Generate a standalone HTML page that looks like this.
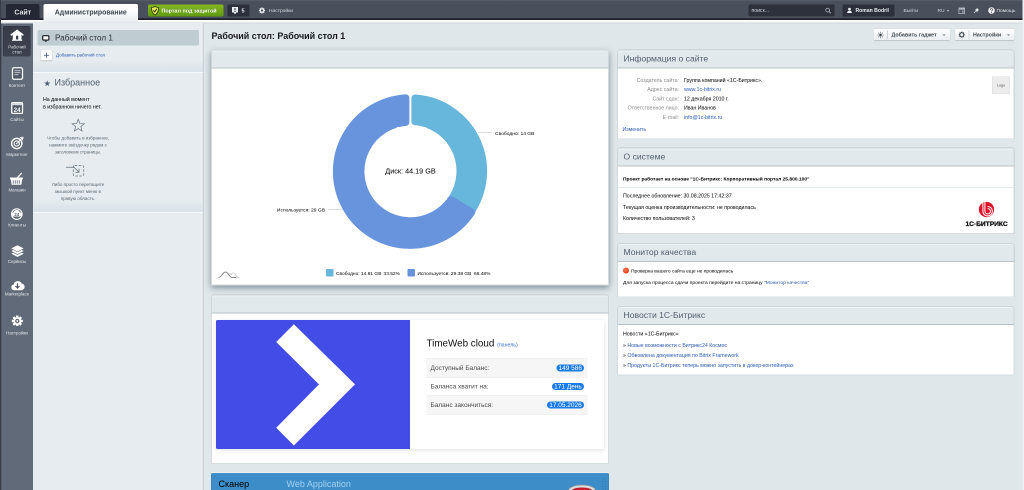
<!DOCTYPE html>
<html lang="ru">
<head>
<meta charset="utf-8">
<title>Рабочий стол</title>
<style>
*{box-sizing:border-box;margin:0;padding:0}
html,body{width:1024px;height:490px;overflow:hidden;background:#dfe7ea}
body{font-family:"Liberation Sans",sans-serif;font-size:13px;color:#000}
#root{position:absolute;left:0;top:0;width:2048px;height:980px;transform:scale(.5);transform-origin:0 0;will-change:transform;overflow:hidden}
a{color:#2b5bb5;text-decoration:none}
.abs{position:absolute}
/* header */
#hdr{position:absolute;left:0;top:0;width:2048px;height:40px;background:linear-gradient(#59606b 0,#4b515c 3px,#4a505b 36px,#1d222c 37px,#1d222c 40px)}
#hdrline{position:absolute;left:0;top:40px;width:2048px;height:7px;background:linear-gradient(#fff 0,#f3f6f7 4px,#e4eaed 5px,#c9d1d6 7px)}
.tab-site{position:absolute;left:12px;top:8px;width:67px;height:32px;background:#232834;border-radius:4px 4px 0 0;color:#e8ebef;font-weight:bold;font-size:14px;line-height:32px;text-align:center;text-shadow:0 -1px 0 #000}
.tab-adm{position:absolute;left:87px;top:8px;width:189px;height:36px;background:linear-gradient(#fff 30%,#e9eef0);border-radius:4px 4px 0 0;color:#3f4651;font-weight:bold;font-size:13.900px;line-height:33px;text-align:center}
.btn-green{position:absolute;left:296px;top:9px;width:151px;height:24px;border-radius:3px;background:linear-gradient(#86b81f,#5f9a10);color:#fff;font-weight:bold;font-size:10.8px;line-height:24px;padding-left:27px;text-shadow:0 -1px 0 #4d7d0c;white-space:nowrap}
.btn-dark{position:absolute;top:9px;height:24px;border-radius:3px;background:#2b303c;color:#e8ebef;font-weight:bold;font-size:11px;line-height:24px;white-space:nowrap}
.hlink{position:absolute;top:9px;height:24px;line-height:24px;color:#cfd4db;font-size:9.8px;white-space:nowrap}
/* left menu */
#lmenu{position:absolute;left:0;top:47px;width:66px;height:940px;background:#616a78}
#lmenu .edge{position:absolute;left:0;top:0;width:3px;height:100%;background:#4a5160}
.mi{position:absolute;left:1px;width:66px;text-align:center;color:#e4e7ec;font-size:8.900px;line-height:10.500px;white-space:nowrap}
.mi svg{display:block;margin:0 auto}
.actbox{position:absolute;left:6px;top:5px;width:55px;height:61px;background:linear-gradient(#383d49,#40465280);background-color:#3a3f4b;border:1px solid #2e323c;border-radius:3px;box-shadow:0 1px 0 rgba(255,255,255,.15)}
/* submenu */
#sub{position:absolute;left:66px;top:47px;width:341px;height:940px;background:#e6ecef;border-right:2px solid #ccd5da;box-shadow:inset -2px 0 0 #f1f5f7}
.deskitem{position:absolute;left:9px;top:13px;width:323px;height:31px;background:#bfccd2;border-radius:4px;font-size:16.3px;line-height:31px;color:#2a2f38;padding-left:35px}
.sub-sep{position:absolute;left:0;width:340px;height:2px;background:#d3dce0;border-bottom:1px solid #f4f7f8}
/* widgets */
.wh{position:absolute;background:#e2e9ec;border:2px solid #cdd6da;border-bottom:2px solid #b7c1c7;border-radius:6px 6px 0 0;box-shadow:inset 0 2px 0 #eef3f5;font-size:17.200px;line-height:33px;color:#526070;padding-left:11px;white-space:nowrap}
.wb{position:absolute;background:#fff;border:2px solid #d3dbdf;border-top:none;font-size:10.5px}
.t{position:absolute;white-space:nowrap}

.tbtn i{position:absolute;top:3px;width:3px;height:17px;background:#ccd4d9;border-right:1px solid #fff}
.tbtn{position:absolute;top:58px;height:23px;border-radius:4px;background:linear-gradient(#fff,#e9eef1);box-shadow:0 1px 1px rgba(0,0,0,.3),0 0 0 1px rgba(0,0,0,.05);font-weight:bold;font-size:10.7px;color:#3f4b54}
.tbtn span{position:absolute;top:0;line-height:23px;white-space:nowrap}
.shadow{position:absolute;box-shadow:0 5px 12px rgba(40,60,80,.5)}
.badge{position:absolute;height:14px;border-radius:7px;background:#1b7be9;color:#fff;font-size:13px;line-height:14.500px;text-align:center;white-space:nowrap}
.lbl{text-align:right;color:#8b8b8b;font-size:10.5px}
.val{font-size:10.5px;color:#000}
</style>
</head>
<body>
<div id="root">

<!-- ===== HEADER ===== -->
<div id="hdr"></div>
<div id="hdrline"></div>
<div class="tab-site">Сайт</div>
<div class="tab-adm">Администрирование</div>
<div class="btn-green">Портал под защитой</div>
<svg class="abs" style="left:302px;top:12px" width="16" height="19" viewBox="0 0 16 19"><path d="M8,1 C5.5,2.6 3.2,3 1,3 C0.8,9.5 2.6,14.8 8,18 C13.4,14.8 15.2,9.5 15,3 C12.8,3 10.5,2.6 8,1 Z" fill="#e6e85a" stroke="#2c3a12" stroke-width="1.6"/><path d="M4.6,8.6 L7.3,11.6 L11.6,5.8" fill="none" stroke="#2c3a12" stroke-width="2"/></svg>
<div class="btn-dark" style="left:455px;width:44px;padding-left:28px">5</div>
<svg class="abs" style="left:463px;top:13px" width="14" height="17" viewBox="0 0 14 17"><path d="M1,1 h12 v11 h-3.5 l-2.5,4 l-2.5,-4 h-3.500 Z" fill="#e9ecf0"/><rect x="6" y="3" width="2" height="5" fill="#2b303c"/><rect x="6" y="9" width="2" height="2" fill="#2b303c"/></svg>
<svg class="abs" style="left:518px;top:15px" width="12" height="12" viewBox="-7 -7 14 14"><g fill="#e9ecf0"><rect x="-1.6" y="-7" width="3.2" height="14"/><rect x="-1.6" y="-7" width="3.2" height="14" transform="rotate(45)"/><rect x="-1.6" y="-7" width="3.2" height="14" transform="rotate(90)"/><rect x="-1.6" y="-7" width="3.2" height="14" transform="rotate(135)"/><circle r="5.2"/></g><circle r="2.6" fill="#4a505b"/></svg>
<div class="hlink" style="left:538px;color:#d5d9df">Настройки</div>

<div class="abs" style="left:1497px;top:9px;width:172px;height:24px;background:#2c313c;border-radius:3px;border:1px solid #252931;box-shadow:0 1px 0 rgba(255,255,255,.12)"></div>
<div class="hlink" style="left:1503px;color:#d5d9df;font-size:10.2px">поиск...</div>
<svg class="abs" style="left:1650px;top:15px" width="13" height="13" viewBox="0 0 15 15"><circle cx="6" cy="6" r="4.3" fill="none" stroke="#aeb4be" stroke-width="1.8"/><path d="M9.2,9.2 L13.5,13.5" stroke="#aeb4be" stroke-width="2.2"/></svg>
<div class="btn-dark" style="left:1685px;width:104px;padding-left:26px;font-size:10.2px">Roman Bodril</div>
<svg class="abs" style="left:1694px;top:15px" width="10" height="12" viewBox="0 0 12 14"><circle cx="6" cy="3.6" r="3.2" fill="#f0f2f5"/><path d="M0.5,13 C0.5,9 3,7.6 6,7.6 C9,7.6 11.500,9 11.500,13 Z" fill="#f0f2f5"/></svg>
<div class="hlink" style="left:1807px">Выйти</div>
<div class="hlink" style="left:1875px">RU</div>
<svg class="abs" style="left:1893px;top:20px" width="6" height="4" viewBox="0 0 8 5"><path d="M0.5,0.5 h7 l-3.500,4 Z" fill="#c9ced6"/></svg>
<svg class="abs" style="left:1917px;top:15px" width="13" height="13" viewBox="0 0 15 15"><rect x="1" y="1" width="13" height="13" fill="none" stroke="#b4bac3" stroke-width="1.8"/><rect x="1" y="1" width="13" height="4" fill="#b4bac3"/><rect x="8" y="7" width="4" height="5" fill="#9aa0aa"/></svg>
<svg class="abs" style="left:1947px;top:15px" width="12" height="12" viewBox="0 0 16 16"><path d="M9,1 L15,7 L13,7.500 L10.500,10 L10.500,13 L3,5.500 L6,5.500 L8.500,3 Z" fill="#e9ecf0"/><path d="M6.500,9.500 L1.500,14.500" stroke="#e9ecf0" stroke-width="1.8"/></svg>
<svg class="abs" style="left:1976px;top:14px" width="14" height="14" viewBox="0 0 16 16"><circle cx="8" cy="8" r="7.5" fill="#f0f2f5"/><path d="M5.600,6.200 C5.600,3 10.600,3 10.600,6 C10.600,8 8,7.800 8,10" fill="none" stroke="#4a505b" stroke-width="1.8"/><rect x="7" y="11.200" width="2" height="2" fill="#4a505b"/></svg>
<div class="hlink" style="left:1993px;color:#e1e4e9">Помощь</div>

<!-- ===== LEFT MENU ===== -->
<div id="lmenu"><div class="edge"></div>
  <div class="actbox"></div>
  <svg class="abs" style="left:0;top:0" width="66" height="700" viewBox="0 47 66 700" font-family="Liberation Sans, sans-serif">
    <!-- home -->
    <path d="M21.500,70.500 L34.200,60.800 L46.800,70.500" stroke="#fff" stroke-width="3" fill="none"/>
    <path d="M25.500,69 L34.200,62.500 L43,69 V80 H25.500 Z" fill="#fff"/>
    <rect x="32" y="71.500" width="4.600" height="7.500" fill="#3a3f4b"/>
    <rect x="24" y="79.600" width="20.500" height="2" fill="#fff"/>
    <!-- content -->
    <rect x="25" y="135.500" width="20" height="23" rx="3" fill="#515968" stroke="#fff" stroke-width="2.600"/>
    <path d="M29,141.500h12M29,145.500h12M29,149.500h8" stroke="#e8ebef" stroke-width="1.700"/>
    <!-- sites -->
    <rect x="23.500" y="205.200" width="21.500" height="21.500" rx="2" fill="#515968" stroke="#fff" stroke-width="2.600"/>
    <rect x="24" y="206" width="20.500" height="4.500" fill="#d5d9e0"/>
    <text x="34.300" y="224" font-size="12.500" font-weight="bold" fill="#fff" text-anchor="middle">24</text>
    <!-- marketing -->
    <g fill="none" stroke="#fff">
      <circle cx="33.500" cy="287" r="10.300" stroke-width="2.800"/>
      <circle cx="33.500" cy="287" r="5.200" stroke-width="2.200"/>
      <circle cx="33.500" cy="287" r="1.600" fill="#fff" stroke="none"/>
      <path d="M35,285.500 L44.500,276" stroke-width="2.200"/>
      <path d="M40,275.500 l6,-1 l-1,6" stroke-width="1.800"/>
    </g>
    <!-- shop -->
    <g fill="#fff" stroke="none">
      <path d="M20,355 h26 v3.600 h-1.500 l-1.800,10.900 h-19.400 l-1.800,-10.900 h-1.500 Z"/>
      <path d="M33,355.500 l9.500,-10.500 l2,1.800 l-8,8.700 Z"/>
      <path d="M26.500,360.500v7M30.500,360.500v7M34.500,360.500v7M38.500,360.500v7" stroke="#616a78" stroke-width="1.700"/>
    </g>
    <!-- clients -->
    <circle cx="33.600" cy="428.200" r="10.600" fill="none" stroke="#fff" stroke-width="2.200"/>
    <path d="M26.500,433 a4,4 0 0 1 0.500,-8 a6.500,6.500 0 0 1 12.500,-0.500 a4.300,4.300 0 0 1 1,8.500 Z" fill="#fff"/>
    <text x="33.600" y="432" font-size="8.500" font-weight="bold" fill="#515968" text-anchor="middle">24</text>
    <!-- services -->
    <g fill="#fff">
      <path d="M35,490.500 L47.500,496.800 L35,503 L22.500,496.800 Z"/>
      <path d="M22.500,502 L35,508.300 L47.500,502 L43.500,500 L35,504.300 L26.500,500 Z"/>
      <path d="M22.500,507.500 L35,513.800 L47.500,507.500 L43.500,505.500 L35,509.800 L26.500,505.500 Z"/>
    </g>
    <!-- marketplace -->
    <path d="M28,580.500 a5.800,5.800 0 0 1 -0.500,-11.500 a8.200,8.200 0 0 1 15.500,-2 a6.800,6.800 0 0 1 0.500,13.500 Z" fill="#fff"/>
    <path d="M35,566.500 v8 M31,572 l4,4 l4,-4" stroke="#515968" stroke-width="2.400" fill="none"/>
    <!-- settings -->
    <g transform="translate(34.600,642)">
      <g fill="#fff">
        <rect x="-2.500" y="-11" width="5" height="22" rx="1"/>
        <rect x="-2.500" y="-11" width="5" height="22" rx="1" transform="rotate(45)"/>
        <rect x="-2.500" y="-11" width="5" height="22" rx="1" transform="rotate(90)"/>
        <rect x="-2.500" y="-11" width="5" height="22" rx="1" transform="rotate(135)"/>
        <circle r="7.800"/>
      </g>
      <circle r="4.400" fill="#616a78"/>
      <circle r="1.900" fill="#fff"/>
    </g>
  </svg>
  <div class="mi" style="top:43px;line-height:9.500px">Рабочий<br>стол</div>
  <div class="mi" style="top:119px">Контент</div>
  <div class="mi" style="top:187px">Сайты</div>
  <div class="mi" style="top:257px">Маркетинг</div>
  <div class="mi" style="top:328px">Магазин</div>
  <div class="mi" style="top:398px">Клиенты</div>
  <div class="mi" style="top:471px">Сервисы</div>
  <div class="mi" style="top:536px">Marketplace</div>
  <div class="mi" style="top:614px">Настройки</div>
</div>

<!-- ===== SUBMENU ===== -->
<div id="sub">
  <div class="abs" style="left:0;top:73px;width:340px;height:24px;background:linear-gradient(rgba(215,226,232,0),rgba(206,220,229,.55))"></div>
  <div class="abs" style="left:0;top:97px;width:340px;height:2px;background:#f7fafb"></div>
  <div class="deskitem">Рабочий стол 1</div>
  <svg class="abs" style="left:18px;top:23px" width="16" height="14" viewBox="0 0 18 16"><rect x="1.5" y="1.5" width="14" height="10" rx="2" fill="#fff" stroke="#15181d" stroke-width="2.6"/><path d="M5,13 h7 l-3.5,3 Z" fill="#15181d"/></svg>
  <div class="abs" style="left:16px;top:53px;width:22px;height:21px;background:#f8fafb;border-radius:3px;box-shadow:0 1px 2px rgba(0,0,0,.3)"></div>
  <svg class="abs" style="left:16px;top:53px" width="22" height="21" viewBox="0 0 22 21"><path d="M11,5.500v10M6,10.500h10" stroke="#40557e" stroke-width="1.700"/></svg>
  <div class="t" style="left:46px;top:58px;font-size:9px;color:#2b5bb5">Добавить рабочий стол</div>
  <svg class="abs" style="left:22px;top:113px" width="13" height="13" viewBox="0 0 16 16"><path d="M8,1 L10,6 L15.5,6.3 L11.2,9.7 L12.7,15 L8,12 L3.3,15 L4.8,9.7 L0.5,6.3 L6,6 Z" fill="#52627a"/></svg>
  <div class="t" style="left:43px;top:108px;font-size:18px;color:#53606f">Избранное</div>
  <div class="t" style="left:20px;top:144px;font-size:10.500px;line-height:15.400px;color:#000">На данный момент<br>в избранном ничего нет.</div>
  <svg class="abs" style="left:76px;top:189px" width="29" height="29" viewBox="0 0 32 32"><path d="M16,3 L19.6,12.2 L29.5,12.8 L21.8,19.1 L24.4,28.7 L16,23.3 L7.6,28.7 L10.2,19.1 L2.5,12.8 L12.4,12.2 Z" fill="none" stroke="#66717d" stroke-width="1.500" stroke-linejoin="miter"/></svg>
  <div class="t" style="left:-2px;width:184px;top:222px;font-size:9px;line-height:14px;color:#5d6873;text-align:center">Чтобы добавить в избранное,<br>нажмите звёздочку рядом с<br>заголовком страницы.</div>
  <svg class="abs" style="left:60px;top:278px" width="52" height="36" viewBox="60 278 52 36"><rect x="80.500" y="284" width="21" height="21" rx="3" fill="none" stroke="#66717d" stroke-width="1.500" stroke-dasharray="5 3"/><path d="M66,287.500 H82 L92,297.500 M92,290.500 V297.500 H85" fill="none" stroke="#66717d" stroke-width="1.500"/></svg>
  <div class="t" style="left:-2px;width:184px;top:315px;font-size:9px;line-height:14px;color:#5d6873;text-align:center">Либо просто перетащите<br>мышкой пункт меню в<br>правую область.</div>
  <div class="abs" style="left:0;top:353px;width:340px;height:24px;background:linear-gradient(rgba(215,226,232,0),rgba(206,220,229,.55))"></div>
  <div class="abs" style="left:0;top:377px;width:340px;height:2px;background:#f7fafb"></div>
</div>

<!-- ===== MAIN ===== -->
<div class="abs" style="left:2045px;top:0;width:3px;height:980px;background:#eef2f4;z-index:50"></div>
<div class="abs" style="left:0;top:0;width:2px;height:980px;background:#383c46;z-index:50"></div>
<div class="t" style="left:423px;top:62px;font-size:17.900px;font-weight:bold;color:#16181c">Рабочий стол: Рабочий стол 1</div>

<!-- toolbar buttons -->
<div class="tbtn" style="left:1747px;width:153px"><span style="left:36px">Добавить гаджет</span><i style="left:27px"></i>
  <svg class="abs" style="left:7px;top:5px" width="14" height="14" viewBox="-7 -7 14 14"><g stroke="#4a555e" stroke-width="1.100"><path d="M0,-6.500V6.500M-6.500,0H6.500M-4.600,-4.600L4.600,4.600M-4.600,4.600L4.600,-4.600"/></g><circle r="3" fill="#3f4b54" stroke="#f4f7f8" stroke-width=".8"/></svg>
  <svg class="abs" style="left:137px;top:10px" width="8" height="5" viewBox="0 0 8 5"><path d="M0.500,0.500 h7 l-3.500,4 Z" fill="#8f989f"/></svg>
</div>
<div class="tbtn" style="left:1910px;width:119px"><span style="left:36px">Настройки</span><i style="left:27px"></i>
  <svg class="abs" style="left:7px;top:5px" width="13" height="13" viewBox="-7 -7 14 14"><g fill="#3f4b54"><rect x="-1.400" y="-6.500" width="2.800" height="13"/><rect x="-1.400" y="-6.500" width="2.800" height="13" transform="rotate(45)"/><rect x="-1.400" y="-6.500" width="2.800" height="13" transform="rotate(90)"/><rect x="-1.400" y="-6.500" width="2.800" height="13" transform="rotate(135)"/><circle r="5"/></g><circle r="3.100" fill="#f4f7f8"/></svg>
  <svg class="abs" style="left:103px;top:10px" width="8" height="5" viewBox="0 0 8 5"><path d="M0.500,0.500 h7 l-3.500,4 Z" fill="#8f989f"/></svg>
</div>

<!-- widget 1: disk chart -->
<div class="shadow" style="left:422px;top:100px;width:796px;height:471px"></div>
<div class="wh" style="left:422px;top:99px;width:796px;height:38px"></div>
<div class="wb" style="left:422px;top:137px;width:796px;height:434px"></div>
<svg class="abs" style="left:0;top:0" width="1240" height="580" viewBox="0 0 1240 580" font-family="Liberation Sans, sans-serif">
  <path d="M829.8,196.1A146.2,146.2 0 0 1 943.7,421.5L905.3,393.9A99.0,99.0 0 0 0 829.8,243.4Z" fill="#67b7dc" stroke="#67b7dc" stroke-width="14" stroke-linejoin="round"/>
  <path d="M943.7,424.2A147.6,147.6 0 1 1 811.7,195.7L811.7,244.8A98.6,98.6 0 1 0 901.5,399.2Z" fill="#6794dc" stroke="#6794dc" stroke-width="14" stroke-linejoin="round"/>
  <path d="M956,265 L984,265" stroke="#cfcfcf" stroke-width="1.5" fill="none"/>
  <path d="M686,419 L656,419" stroke="#cfcfcf" stroke-width="1.5" fill="none"/>
  <text x="990" y="269.500" font-size="9.900" fill="#000">Свободно: 14 GB</text>
  <text x="650" y="423" font-size="9.900" fill="#000" text-anchor="end">Используется: 29 GB</text>
  <text x="821" y="347" font-size="14.500" fill="#000" text-anchor="middle">Диск: 44.19 GB</text>
  <rect x="652" y="538" width="15" height="15" rx="2" fill="#67b7dc"/>
  <text x="672" y="549.500" font-size="9.700" fill="#000">Свободно: 14.81 GB</text>
  <text x="767" y="549.500" font-size="9.700" fill="#000">33.52%</text>
  <rect x="815" y="538" width="15" height="15" rx="2" fill="#6794dc"/>
  <text x="835" y="549.500" font-size="9.700" fill="#000">Используется: 29.38 GB</text>
  <text x="948" y="549.500" font-size="9.700" fill="#000">66.48%</text>
  <path d="M456,551 C458,546 460,546 462,550 C464,545 468,544 471,550 C473,554 475,555 479,555 H464" stroke="#c4c4c4" stroke-width="1.400" fill="none"/>
  <path d="M437,555 C445,553 445,544 451,544 C457,544 458,554 464,555 H472" stroke="#6a6a6a" stroke-width="1.500" fill="none"/>
</svg>

<!-- widget 2: timeweb -->
<div class="wh" style="left:422px;top:589px;width:796px;height:38px"></div>
<div class="wb" style="left:422px;top:627px;width:796px;height:301px"></div>
<div class="abs" style="left:432px;top:640px;width:776px;height:258px;background:#fff;border-radius:3px;box-shadow:0 2px 10px rgba(0,0,0,.12)"></div>
<div class="abs" style="left:432px;top:640px;width:388px;height:258px;background:#444ce7;border-radius:3px 0 0 3px;overflow:hidden">
  <svg width="388" height="258" viewBox="0 0 388 258"><path d="M155.700,8.500 L278,128.700 L155.700,251 L120.500,215.500 L206,128.700 L120.500,44 Z" fill="#fff"/></svg>
</div>
<div class="t" style="left:853px;top:675px;font-size:19.700px;color:#111">TimeWeb cloud <span style="font-size:10.500px;color:#3a6fd0">(панель)</span></div>
<div class="abs" style="left:853px;top:717px;width:322px;height:37px;background:#f6f6f6;border-top:1px solid #e2e2e2"></div>
<div class="abs" style="left:853px;top:754px;width:322px;height:37px;background:#fff;border-top:1px solid #e2e2e2"></div>
<div class="abs" style="left:853px;top:791px;width:322px;height:38px;background:#f6f6f6;border-top:1px solid #e2e2e2;border-bottom:1px solid #e2e2e2"></div>
<div class="t" style="left:861px;top:728px;font-size:13px;color:#4a4a4a">Доступный Баланс:</div>
<div class="t" style="left:861px;top:765px;font-size:13px;color:#4a4a4a">Баланса хватит на:</div>
<div class="t" style="left:861px;top:802px;font-size:13px;color:#4a4a4a">Баланс закончиться:</div>
<div class="badge" style="left:1113px;top:729px;width:55px">149 586</div>
<div class="badge" style="left:1104px;top:766px;width:64px">171 День</div>
<div class="badge" style="left:1094px;top:803px;width:74px">17.05.2026</div>

<!-- widget 3: scanner -->
<div class="abs" style="left:422px;top:945px;width:796px;height:2px;background:#f3f7f9"></div>
<div class="abs" style="left:422px;top:946px;width:796px;height:40px;background:#3c8dc8;border:1px solid #3783bd;border-top-color:#4d9ad0;border-radius:3px 3px 0 0"></div>
<div class="t" style="left:437px;top:958px;font-size:18px;color:#000">Сканер</div>
<div class="t" style="left:573px;top:958px;font-size:18px;color:#a6d2f1">Web Application</div>
<svg class="abs" style="left:1130px;top:964px" width="68" height="20" viewBox="0 0 68 20"><ellipse cx="34" cy="17" rx="27" ry="11" fill="#d8dde0" stroke="#8d9499" stroke-width="1.500"/><ellipse cx="34" cy="19" rx="22" ry="8" fill="#c51a2a"/><ellipse cx="34" cy="21" rx="16" ry="6" fill="#e8313f"/></svg>
<svg class="abs" style="left:1205px;top:956px" width="8" height="30" viewBox="0 0 8 30"><g fill="#2f78ae"><rect x="0" y="1" width="2" height="2"/><rect x="5" y="1" width="2" height="2"/><rect x="0" y="6" width="2" height="2"/><rect x="5" y="6" width="2" height="2"/><rect x="0" y="11" width="2" height="2"/><rect x="5" y="11" width="2" height="2"/><rect x="0" y="16" width="2" height="2"/><rect x="5" y="16" width="2" height="2"/><rect x="0" y="21" width="2" height="2"/><rect x="5" y="21" width="2" height="2"/></g></svg>

<!-- right column -->
<div class="wh" style="left:1234px;top:99px;width:795px;height:38px">Информация о сайте</div>
<div class="wb" style="left:1234px;top:137px;width:795px;height:142px"></div>
<div class="t lbl" style="left:1236px;width:122px;top:154px">Создатель сайта:</div>
<div class="t lbl" style="left:1236px;width:122px;top:172px">Адрес сайта:</div>
<div class="t lbl" style="left:1236px;width:122px;top:191px">Сайт сдан:</div>
<div class="t lbl" style="left:1236px;width:122px;top:209px">Ответственное лицо:</div>
<div class="t lbl" style="left:1236px;width:122px;top:228px">E-mail:</div>
<div class="t val" style="left:1368px;top:154px">Группа компаний «1С-Битрикс».</div>
<div class="t val" style="left:1368px;top:172px"><a>www.1c-bitrix.ru</a></div>
<div class="t val" style="left:1368px;top:191px">12 декабря 2010 г.</div>
<div class="t val" style="left:1368px;top:209px">Иван Иванов</div>
<div class="t val" style="left:1368px;top:228px"><a>info@1c-bitrix.ru</a></div>
<div class="t val" style="left:1245px;top:252px"><a>Изменить</a></div>
<div class="abs" style="left:1984px;top:153px;width:36px;height:35px;background:#ececec;border:1px solid #dcdcdc;font-size:7px;line-height:33px;text-align:center;color:#444">Logo</div>

<div class="wh" style="left:1234px;top:295px;width:795px;height:38px">О системе</div>
<div class="wb" style="left:1234px;top:333px;width:795px;height:135px"></div>
<div class="t val" style="left:1246px;top:352px;font-weight:bold;font-size:9.800px">Проект работает на основе "1С-Битрикс: Корпоративный портал 25.800.100"</div>
<div class="abs" style="left:1236px;top:374px;width:791px;height:2px;background:#e3eaee"></div>
<div class="t val" style="left:1246px;top:385px">Последнее обновление: 30.08.2025 17:42:37</div>
<div class="t val" style="left:1246px;top:408px">Текущая оценка производительности: не проводилась</div>
<div class="t val" style="left:1246px;top:430px">Количество пользователей: 3</div>
<svg class="abs" style="left:1948px;top:394px" width="50" height="50" viewBox="0 0 50 50">
  <circle cx="25" cy="25" r="15.300" fill="#e0142d"/>
  <path d="M21.800,10 V28.500 A5.500,5.500 0 1 0 27.300,23" stroke="#fff" stroke-width="2" fill="none"/>
  <path d="M17.800,11.500 V28.500 A9.500,9.500 0 1 0 27.300,19" stroke="#fff" stroke-width="2" fill="none"/>
</svg>
<div class="t" style="left:1931px;top:440px;font-size:13.400px;font-weight:bold;color:#111;letter-spacing:-.1px;-webkit-text-stroke:.5px #111">1С·БИТРИКС</div>

<div class="wh" style="left:1234px;top:486px;width:795px;height:38px">Монитор качества</div>
<div class="wb" style="left:1234px;top:524px;width:795px;height:71px"></div>
<div class="abs" style="left:1246px;top:535px;width:12px;height:12px;border-radius:6px;background:radial-gradient(circle at 40% 35%,#ff7a4a,#f0401a 70%)"></div>
<div class="t val" style="left:1262px;top:536px;font-size:9.800px">Проверка вашего сайта еще не проводилась</div>
<div class="t val" style="left:1246px;top:559px;font-size:9.900px">Для запуска процесса сдачи проекта перейдите на страницу <a>"Монитор качества"</a></div>

<div class="wh" style="left:1234px;top:612px;width:795px;height:38px">Новости 1С-Битрикс</div>
<div class="wb" style="left:1234px;top:650px;width:795px;height:101px"></div>
<div class="t val" style="left:1246px;top:661px">Новости «1С-Битрикс»</div>
<div class="t val" style="left:1246px;top:684px">» <a>Новые возможности с Битрикс24 Космос</a></div>
<div class="t val" style="left:1246px;top:704px">» <a>Обновлена документация по Bitrix Framework</a></div>
<div class="t val" style="left:1246px;top:724px">» <a>Продукты 1С-Битрикс теперь можно запустить в докер-контейнерах</a></div>

</div>
</body>
</html>
